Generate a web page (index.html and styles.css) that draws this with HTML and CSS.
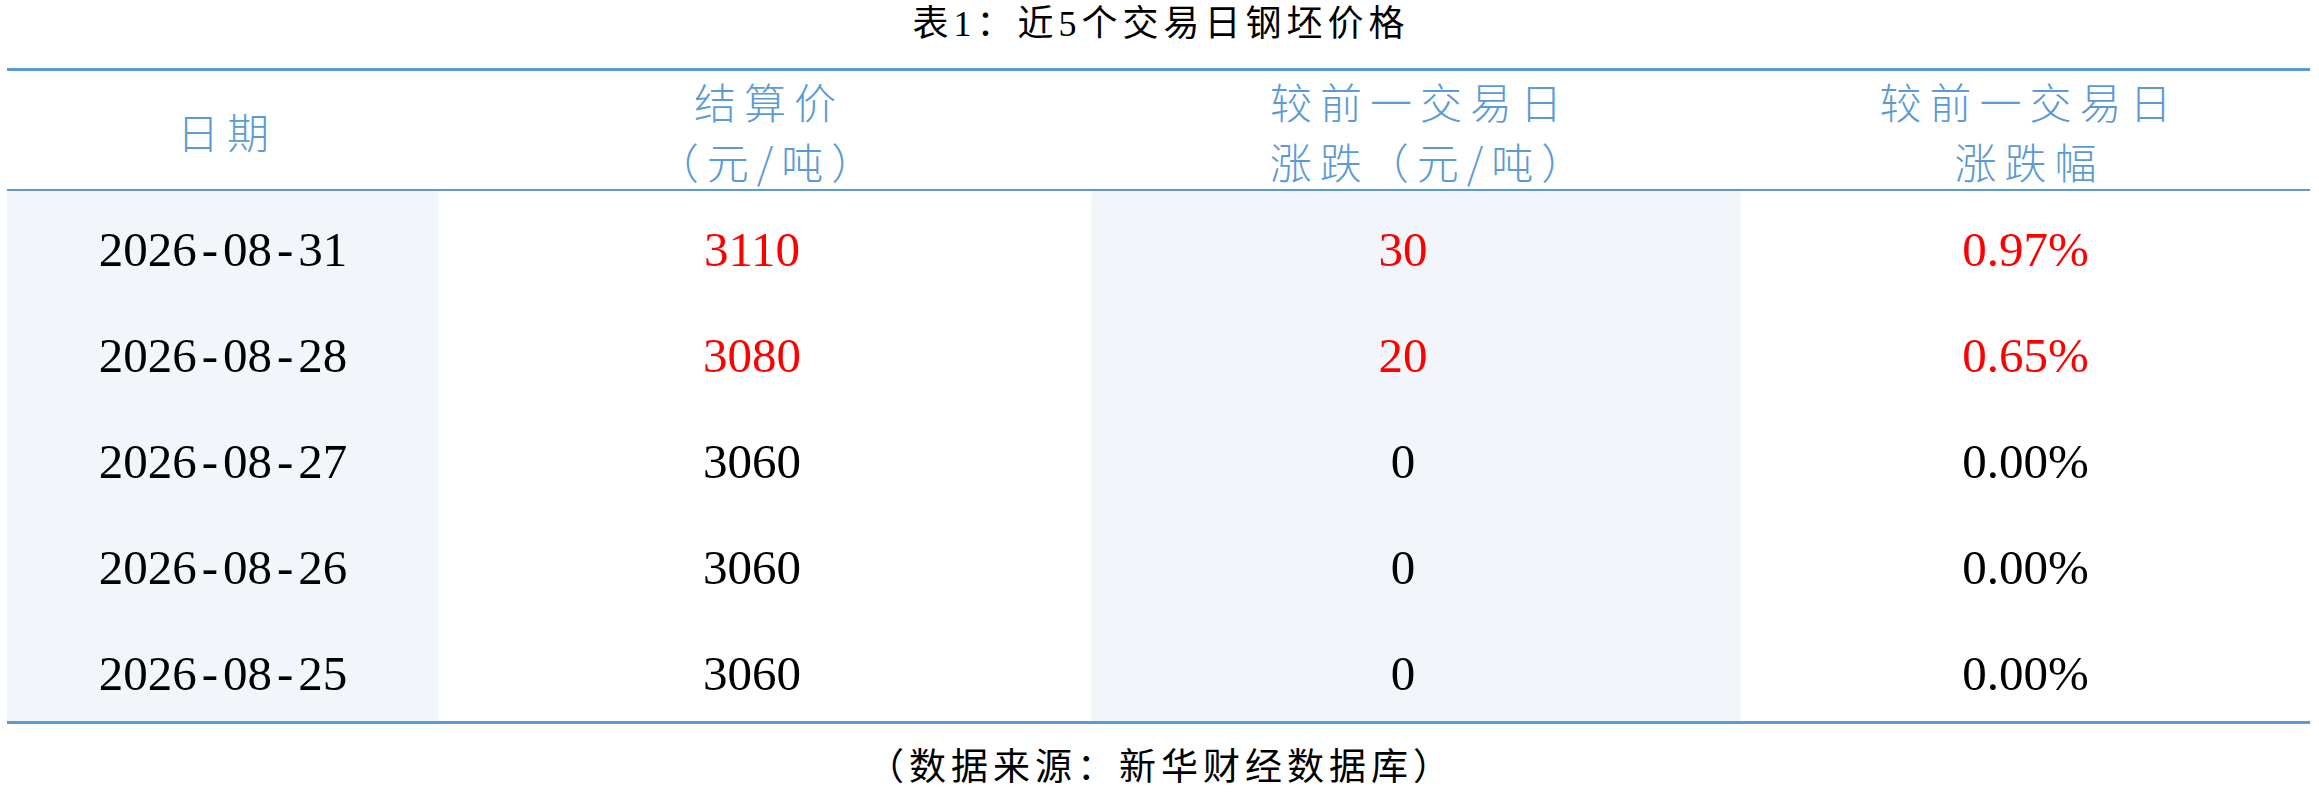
FILE: index.html
```html
<!DOCTYPE html>
<html lang="zh-CN">
<head>
<meta charset="utf-8">
<title>近5个交易日钢坯价格</title>
<link rel="stylesheet" href="styles.css">
</head>
<body>
<div class="page">
  <div class="title">表1：近5个交易日钢坯价格</div>
  <div class="table">
    <div class="row head">
      <div class="th"><div class="thc">日期</div></div>
      <div class="th"><div class="thc">结算价<br><span class="p">（</span>元/吨<span class="p">）</span></div></div>
      <div class="th"><div class="thc">较前一交易日<br>涨跌<span class="p wide">（</span>元/吨<span class="p">）</span></div></div>
      <div class="th"><div class="thc">较前一交易日<br>涨跌幅</div></div>
    </div>
    <div class="row">
      <div class="td shade">2026<span class="dash">-</span>08<span class="dash">-</span>31</div>
      <div class="td shift up">3110</div>
      <div class="td shade shift up">30</div>
      <div class="td up">0.97%</div>
    </div>
    <div class="row">
      <div class="td shade">2026<span class="dash">-</span>08<span class="dash">-</span>28</div>
      <div class="td shift up">3080</div>
      <div class="td shade shift up">20</div>
      <div class="td up">0.65%</div>
    </div>
    <div class="row">
      <div class="td shade">2026<span class="dash">-</span>08<span class="dash">-</span>27</div>
      <div class="td shift">3060</div>
      <div class="td shade shift">0</div>
      <div class="td">0.00%</div>
    </div>
    <div class="row">
      <div class="td shade">2026<span class="dash">-</span>08<span class="dash">-</span>26</div>
      <div class="td shift">3060</div>
      <div class="td shade shift">0</div>
      <div class="td">0.00%</div>
    </div>
    <div class="row">
      <div class="td shade">2026<span class="dash">-</span>08<span class="dash">-</span>25</div>
      <div class="td shift">3060</div>
      <div class="td shade shift">0</div>
      <div class="td">0.00%</div>
    </div>
  </div>
  <div class="source"><span class="p">（</span>数据来源：新华财经数据库<span class="p">）</span></div>
</div>
</body>
</html>
```

FILE: styles.css
```css
html, body {
  margin: 0;
  padding: 0;
  background: #ffffff;
}

.page {
  padding: 0 9px 0 7px;
  font-family: "Liberation Serif", "Noto Sans CJK SC", serif;
  color: #000000;
}

.title {
  height: 48px;
  line-height: 48px;
  margin-bottom: 20px;
  text-align: center;
  font-size: 36px;
  letter-spacing: 5px;
  padding-left: 5px;
}

.table {
  border-top: 3px solid #5b9bd5;
  border-bottom: 3px solid #5b9bd5;
}

.row {
  display: grid;
  grid-template-columns: 432px 652px 650px 569px;
  height: 106px;
}

.row.head {
  height: 118px;
  border-bottom: 2px solid #5b9bd5;
}

.th {
  display: flex;
  align-items: center;
  justify-content: center;
  font-family: "Noto Sans CJK SC", sans-serif;
  font-weight: 300;
  font-size: 42px;
  line-height: 60px;
  letter-spacing: 8px;
  color: #5b9bd5;
}

.thc {
  text-align: center;
  padding-left: 8px;
}

.td {
  display: flex;
  align-items: center;
  justify-content: center;
  font-family: "Liberation Serif", serif;
  font-size: 49px;
  line-height: 60px;
  padding-top: 12px;
  box-sizing: border-box;
}

.shade {
  background: #f2f6fb;
}

.shift {
  padding-right: 26px;
}

.up {
  color: #ff0000;
}

.dash {
  margin: 0 5px;
}

.p {
  font-feature-settings: "halt";
}

.p.wide {
  margin-left: 18px;
}

.source {
  margin-top: 16px;
  line-height: 48px;
  text-align: center;
  font-family: "Noto Sans CJK SC", sans-serif;
  font-size: 37px;
  letter-spacing: 5px;
  padding-left: 5px;
}
```
